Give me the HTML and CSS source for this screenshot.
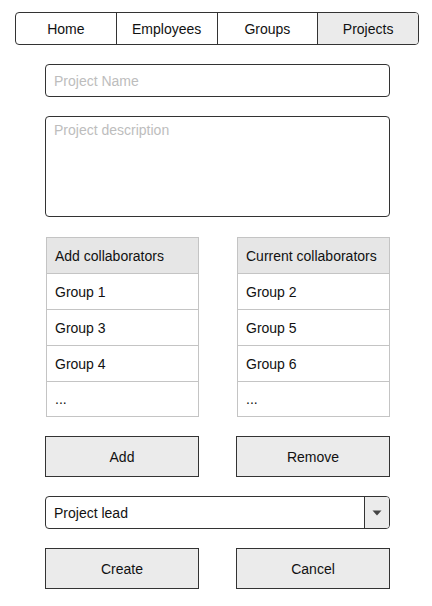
FILE: index.html
```html
<!DOCTYPE html>
<html>
<head>
<meta charset="utf-8">
<link rel="stylesheet" href="styles.css">
</head>
<body>
<nav class="tabs">
  <div class="tab">Home</div>
  <div class="tab">Employees</div>
  <div class="tab">Groups</div>
  <div class="tab active">Projects</div>
</nav>
<main class="form">
  <div class="field name"><span class="placeholder">Project Name</span></div>
  <div class="field desc"><span class="placeholder">Project description</span></div>
  <div class="lists">
    <div class="list left">
      <div class="row head">Add collaborators</div>
      <div class="row">Group 1</div>
      <div class="row">Group 3</div>
      <div class="row">Group 4</div>
      <div class="row">...</div>
    </div>
    <div class="list">
      <div class="row head">Current collaborators</div>
      <div class="row">Group 2</div>
      <div class="row">Group 5</div>
      <div class="row">Group 6</div>
      <div class="row">...</div>
    </div>
  </div>
  <div class="buttons">
    <div class="btn">Add</div>
    <div class="btn">Remove</div>
  </div>
  <div class="select">
    <span class="select-label">Project lead</span>
    <span class="select-arrow"><svg width="10" height="6" viewBox="0 0 10 6"><path d="M0.5 0.5h9L5 5.5z" fill="#444"/></svg></span>
  </div>
  <div class="buttons">
    <div class="btn">Create</div>
    <div class="btn">Cancel</div>
  </div>
</main>
</body>
</html>
```

FILE: styles.css
```css
* { box-sizing: border-box; }
body {
  margin: 0;
  background: #fff;
  font-family: Arial, "Liberation Sans", sans-serif;
  font-size: 14px;
  color: #111;
}
.tabs {
  display: flex;
  margin: 12px 0 0 15px;
  width: 404px;
  height: 33px;
  border: 1px solid #333;
  border-radius: 4px;
  overflow: hidden;
}
.tab {
  flex: 1;
  display: flex;
  align-items: center;
  justify-content: center;
  border-left: 1px solid #333;
}
.tab:first-child { border-left: none; }
.tab.active { background: #ebebeb; }
.form {
  display: flex;
  flex-direction: column;
  margin-left: 45px;
  width: 345px;
}
.field {
  border: 1px solid #333;
  border-radius: 4px;
  padding: 0 8px;
}
.placeholder { color: #bdbdbd; }
.name {
  margin-top: 19px;
  height: 33px;
  display: flex;
  align-items: center;
}
.desc {
  margin-top: 19px;
  height: 101px;
  padding-top: 5px;
}
.lists {
  display: flex;
  justify-content: space-between;
  margin-top: 20px;
}
.list {
  width: 153px;
  border: 1px solid #c4c4c4;
}
.list.left { margin-left: 1px; }
.row {
  height: 36px;
  display: flex;
  align-items: center;
  padding-left: 8px;
  border-top: 1px solid #c4c4c4;
}
.row:first-child { border-top: none; height: 35px; }
.row:last-child { height: 35px; }
.row.head { background: #e6e6e6; }
.buttons {
  display: flex;
  justify-content: space-between;
  margin-top: 19px;
}
.btn {
  width: 154px;
  height: 41px;
  border: 1px solid #333;
  background: #ebebeb;
  display: flex;
  align-items: center;
  justify-content: center;
}
.select {
  margin-top: 19px;
  height: 33px;
  border: 1px solid #333;
  border-radius: 4px;
  display: flex;
  overflow: hidden;
}
.select-label {
  flex: 1;
  display: flex;
  align-items: center;
  padding-left: 8px;
}
.select-arrow {
  width: 25px;
  border-left: 1px solid #333;
  background: #ebebeb;
  display: flex;
  align-items: center;
  justify-content: center;
}
```
